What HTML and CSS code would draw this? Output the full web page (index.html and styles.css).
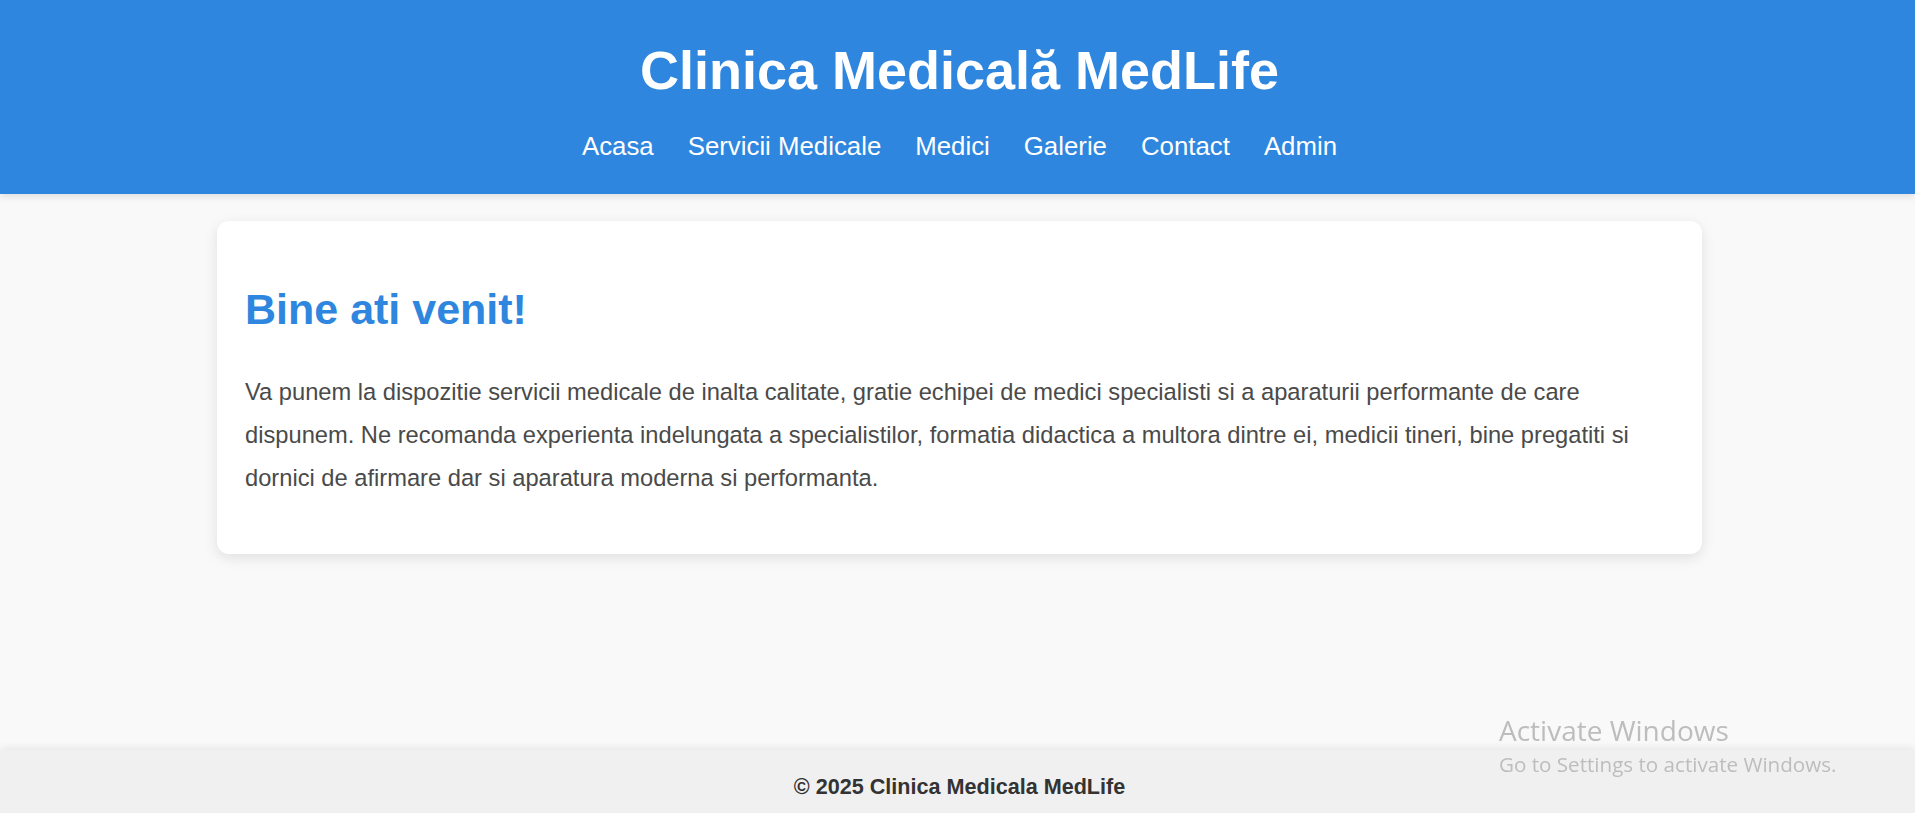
FILE: index.html
```html
<!DOCTYPE html>
<html lang="ro">
<head>
<meta charset="utf-8">
<title>Clinica Medicală MedLife</title>
<link rel="stylesheet" href="styles.css">
</head>
<body>
<header class="site-header">
  <h1 class="site-title">Clinica Medicală MedLife</h1>
  <nav class="site-nav">
    <a href="#">Acasa</a>
    <a href="#">Servicii Medicale</a>
    <a href="#">Medici</a>
    <a href="#">Galerie</a>
    <a href="#">Contact</a>
    <a href="#">Admin</a>
  </nav>
</header>
<main class="site-main">
  <section class="card">
    <h2 class="card-title">Bine ati venit!</h2>
    <p class="card-text">Va punem la dispozitie servicii medicale de inalta calitate, gratie echipei de medici specialisti si a aparaturii performante de care dispunem. Ne recomanda experienta indelungata a specialistilor, formatia didactica a multora dintre ei, medicii tineri, bine pregatiti si dornici de afirmare dar si aparatura moderna si performanta.</p>
  </section>
</main>
<footer class="site-footer">
  <p class="footer-text">© 2025 Clinica Medicala MedLife</p>
</footer>
<div class="watermark">
  <div class="wm-title">Activate Windows</div>
  <div class="wm-sub">Go to Settings to activate Windows.</div>
</div>
</body>
</html>
```
FILE: styles.css
```css
* { box-sizing: border-box; }
html, body { height: 100%; }
body {
  margin: 0;
  padding-left: 4px;
  font-family: "Liberation Sans", Arial, sans-serif;
  background: #f9f9f9;
  color: #333;
  display: flex;
  flex-direction: column;
  min-height: 100vh;
  overflow: hidden;
}
.site-header {
  background: #2e86de;
  color: #fff;
  text-align: center;
  padding: 39px 0 32px;
  margin-left: -4px;
  padding-left: 4px;
  box-shadow: 0 2px 8px rgba(0,0,0,0.12);
  position: relative;
  z-index: 2;
}
.site-title {
  margin: 0 0 31px;
  font-size: 54px;
  font-weight: bold;
  line-height: 1.15;
}
.site-nav {
  display: flex;
  justify-content: center;
  gap: 34px;
  font-size: 25.8px;
  line-height: 1.15;
}
.site-nav a {
  color: #fff;
  text-decoration: none;
}
.site-main {
  flex: 1;
  padding-top: 27px;
}
.card {
  width: 1485px;
  margin: 0 auto;
  background: #fff;
  border-radius: 12px;
  padding: 28px 28px 31px;
  box-shadow: 0 4px 14px rgba(0,0,0,0.1);
}
.card-title {
  color: #2e86de;
  font-size: 43px;
  margin: 36px 0 37px;
  line-height: 1.15;
}
.card-text {
  margin: 23.7px 0;
  font-size: 23.7px;
  line-height: 42.7px;
  color: #4a4a4a;
}
.site-footer {
  height: 63px;
  flex-shrink: 0;
  background: #f0f0f0;
  text-align: center;
  padding-top: 25px;
  margin-left: -4px;
  padding-left: 4px;
  box-shadow: 0 -2px 8px rgba(0,0,0,0.08);
  position: relative;
  z-index: 1;
}
.footer-text {
  margin: 0;
  font-size: 21.6px;
  font-weight: bold;
  line-height: 1.15;
  color: #333;
}
.watermark {
  position: fixed;
  left: 1499px;
  top: 710px;
  color: #bdbdbd;
  font-family: "Open Sans", "Noto Sans", sans-serif;
  z-index: 5;
  pointer-events: none;
}
.wm-title {
  font-size: 28px;
  line-height: 40px;
}
.wm-sub {
  font-size: 20.6px;
  line-height: 28px;
}
```
